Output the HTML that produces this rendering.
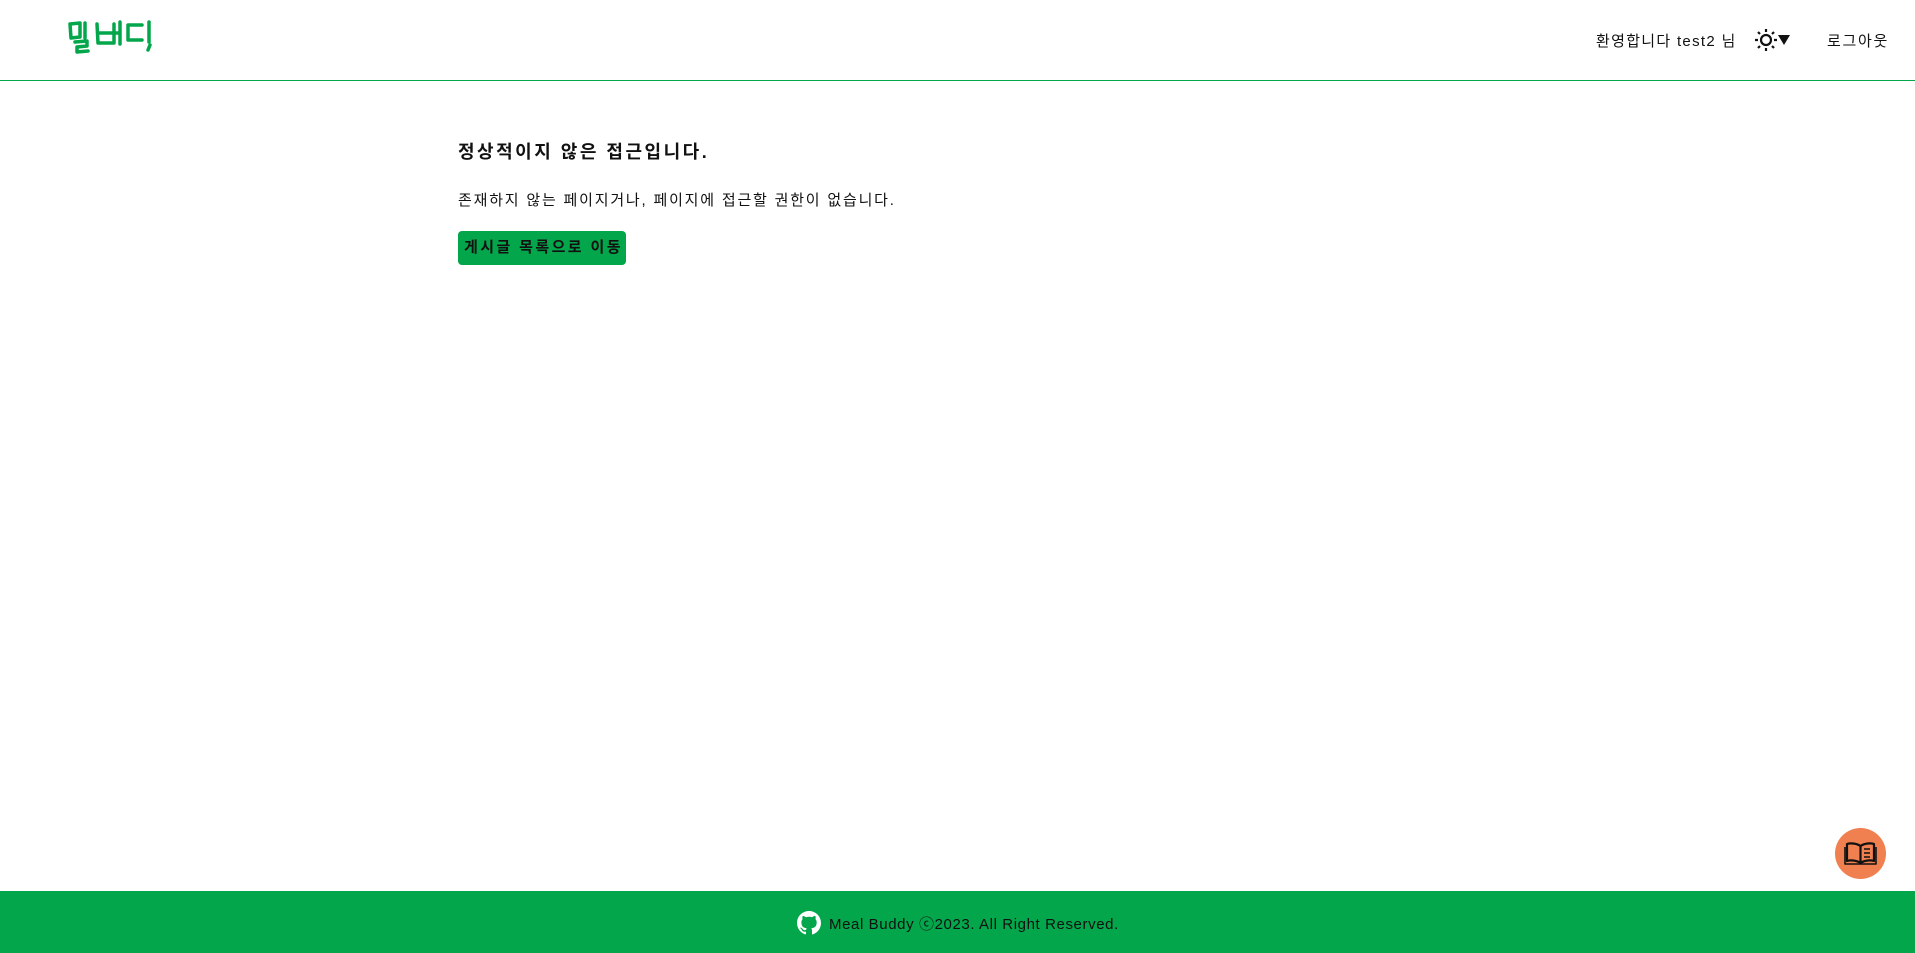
<!DOCTYPE html>
<html><head><meta charset="utf-8"><style>
*{margin:0;padding:0;box-sizing:border-box}
body{width:1915px;height:953px;position:relative;background:#fff;font-family:"Liberation Sans","Noto Sans CJK KR",sans-serif;color:#111;overflow:hidden}
.hdr{position:absolute;left:0;top:0;width:1915px;height:81px;border-bottom:1px solid #03a64a}
.t{position:absolute;font-size:15px;white-space:nowrap}
h1{position:absolute;left:458px;top:138px;font-size:18px;font-weight:bold;letter-spacing:2.5px;white-space:nowrap}
.p{position:absolute;left:458px;top:189px;font-size:15px;letter-spacing:1.8px;white-space:nowrap}
.btn{position:absolute;left:458px;top:231px;width:168px;height:34px;background:#03a64a;border-radius:4px;font-size:15px;font-weight:bold;line-height:34px;padding-left:6px;letter-spacing:2.4px;color:#111;white-space:nowrap}
.ftr{position:absolute;left:0;top:891px;width:1915px;height:62px;background:#03a64a}
.fab{position:absolute;left:1835px;top:828px;width:51px;height:51px;border-radius:50%;background:#f0804f}
</style></head><body>
<div class="hdr">
<svg style="position:absolute;left:60px;top:15px" width="110" height="50" viewBox="0 0 110 50" fill="none" stroke="#03a64a" stroke-width="3.5" stroke-linecap="round" stroke-linejoin="round">
<path d="M10 9 L20 8 L20 22 L11 23 Z"/><path d="M25 8 L25 23"/>
<path d="M15 27 L27 26 L27 31 L17 32 L17 37 L28 36"/>
<path d="M37 9 L38 28 L54 28 L54 9 M38 18 L54 18"/><path d="M54 18 L59 18 M60 7 L60 29"/>
<path d="M82 10 L68 10 L68 25 L82 25"/><path d="M89 7 L89 27"/><path d="M90 30 L88 35"/>
</svg>
<div class="t" style="left:1596px;top:30px;letter-spacing:1.3px">환영합니다 test2 님</div>
<svg style="position:absolute;left:1755px;top:29px" width="22" height="22" viewBox="0 0 22 22" stroke="#111" stroke-width="2.2" fill="none"><circle cx="11" cy="11" r="5"/><path d="M11 0v3M11 19v3M0 11h3M19 11h3M3 3l2 2M17 17l2 2M3 19l2-2M17 5l2-2"/></svg>
<svg style="position:absolute;left:1778px;top:35px" width="12" height="10" viewBox="0 0 12 10"><path d="M0 0H12L6 10Z" fill="#111"/></svg>
<div class="t" style="left:1827px;top:30px;letter-spacing:1.7px">로그아웃</div>
</div>
<h1>정상적이지 않은 접근입니다.</h1>
<div class="p">존재하지 않는 페이지거나, 페이지에 접근할 권한이 없습니다.</div>
<div class="btn">게시글 목록으로 이동</div>
<div class="fab"><svg style="position:absolute;left:9px;top:13px" width="33" height="25" viewBox="0 0 33 25" fill="none" stroke="#111" stroke-width="2.2" stroke-linejoin="round"><path d="M16.5 5C12 2 6 2 3 3V20C6 19 12 19 16.5 22C21 19 27 19 30 20V3C27 2 21 2 16.5 5Z"/><path d="M16.5 5V22"/><path d="M20 8h6M20 12h6M20 16h6" stroke-width="1.5"/><path d="M1 6v17h31V6" stroke-width="1.6"/></svg></div>
<div class="ftr">
<svg style="position:absolute;left:797px;top:20px" width="24" height="24" viewBox="0 0 16 16" fill="#fff"><path d="M8 0C3.58 0 0 3.580 0 8c0 3.54 2.29 6.53 5.470 7.59.4.07.55-.17.55-.38 0-.19-.01-.82-.01-1.49-2.010.37-2.530-.49-2.690-.94-.09-.23-.48-.94-.82-1.13-.28-.15-.68-.52-.01-.53.63-.01 1.080.58 1.230.82.72 1.21 1.87.87 2.33.66.07-.52.28-.87.51-1.07-1.78-.2-3.64-.89-3.640-3.95 0-.87.31-1.59.82-2.15-.08-.2-.36-1.020.08-2.12 0 0 .67-.21 2.2.82.64-.18 1.32-.27 2-.27.68 0 1.36.09 2 .27 1.53-1.04 2.2-.82 2.2-.82.44 1.1.16 1.92.08 2.12.51.56.82 1.27.82 2.15 0 3.07-1.87 3.75-3.65 3.95.29.25.54.73.54 1.48 0 1.07-.01 1.93-.01 2.2 0 .21.15.46.55.38A8.013 8.013 0 0016 8c0-4.42-3.58-8-8-8z"/></svg>
<div class="t" style="left:829px;top:22px;color:#111;letter-spacing:0.6px">Meal Buddy ⓒ2023. All Right Reserved.</div>
</div>
</body></html>
